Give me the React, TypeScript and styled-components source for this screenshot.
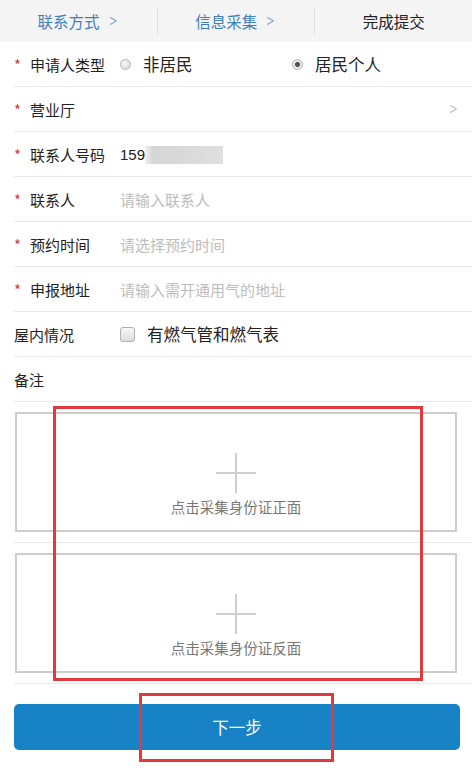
import React from "react";
import styled, { createGlobalStyle } from "styled-components";

const Global = createGlobalStyle`
  html, body { margin: 0; padding: 0; background: #fff; }
  body { font-family: "Noto Sans CJK SC", "Liberation Sans", sans-serif; }
  * { box-sizing: border-box; }
`;

const Page = styled.div`
  position: relative;
  width: 472px;
  min-height: 773px;
  background: #fff;
`;

const Steps = styled.div`
  display: flex;
  height: 42px;
  background: #f4f4f4;
  align-items: center;
`;

const Step = styled.div<{ $active?: boolean; $sep?: boolean }>`
  flex: 1;
  height: 26px;
  display: flex;
  align-items: center;
  justify-content: center;
  gap: 7px;
  font-size: 15.5px;
  color: ${(p) => (p.$active ? "#222" : "#3f7fbd")};
  border-left: ${(p) => (p.$sep ? "1px solid #dedede" : "none")};
`;

const Arrow = styled.span`
  color: #8aa9c9;
  font-size: 15px;
  font-family: "DejaVu Sans", sans-serif;
  transform: scaleX(0.7);
`;

const Row = styled.div`
  display: flex;
  align-items: center;
  height: 45px;
  margin-left: 14px;
  border-bottom: 1px solid #e9e9e9;
  padding-right: 12px;
`;

const Label = styled.div`
  width: 106px;
  flex: none;
  display: flex;
  align-items: center;
  font-size: 15px;
  color: #222;
`;

const Star = styled.span`
  color: #e03a3a;
  width: 16px;
  font-size: 15px;
`;

const Placeholder = styled.span`
  font-size: 15px;
  color: #bdbdbd;
`;

const Value = styled.span`
  font-size: 15px;
  color: #222;
  font-family: "Liberation Sans", "Noto Sans CJK SC", sans-serif;
`;

const Masked = styled.span`
  display: inline-block;
  width: 78px;
  height: 18px;
  margin-top: 1px;
  background: linear-gradient(90deg, #f0f0f0 0px, #d6d6d6 8px, #dcdcdc 60px, #e0e0e0 100%);
  filter: blur(0.6px);
`;

const RadioGroup = styled.div`
  display: flex;
  align-items: center;
`;

const RadioOption = styled.label`
  width: 172px;
  display: flex;
  align-items: center;
  gap: 12px;
  font-size: 16.5px;
  color: #222;
`;

const RadioDot = styled.span<{ $checked?: boolean }>`
  width: 11px;
  height: 11px;
  border-radius: 50%;
  border: 1px solid #b5b5b5;
  background: ${(p) =>
    p.$checked
      ? "radial-gradient(circle, #555 0 2.2px, #e8e8e8 2.8px)"
      : "radial-gradient(circle at 40% 35%, #f6f6f6, #d6d6d6)"};
  flex: none;
`;

const Chevron = styled.span`
  margin-left: auto;
  color: #c2c2c2;
  font-family: "DejaVu Sans", sans-serif;
  font-size: 15px;
  transform: scaleX(0.7);
`;

const CheckWrap = styled.label`
  display: flex;
  align-items: center;
  gap: 12px;
  font-size: 16.5px;
  color: #222;
`;

const CheckBox = styled.span`
  width: 15px;
  height: 15px;
  border-radius: 3px;
  border: 1px solid #b0b0b0;
  background: linear-gradient(#f7f7f7, #dcdcdc);
  flex: none;
`;

const UploadBlock = styled.div`
  margin-left: 14px;
  padding: 10px 15px 10px 1px;
  border-bottom: 1px solid #e9e9e9;
`;

const UploadBox = styled.div`
  height: 120px;
  border: 2px solid #cdcdcd;
  display: flex;
  flex-direction: column;
  align-items: center;
  padding-top: 38px;
  gap: 2px;
`;

const UploadText = styled.div`
  font-size: 14.5px;
  color: #777;
`;

const Button = styled.button`
  display: block;
  margin: 20px 12px 0 14px;
  width: 446px;
  height: 46px;
  border: none;
  border-radius: 5px;
  background: #1783c6;
  color: #fff;
  font-size: 16.5px;
  font-family: "Noto Sans CJK SC", sans-serif;
`;

const Mark = styled.div<{ $l: number; $t: number; $w: number; $h: number }>`
  position: absolute;
  left: ${(p) => p.$l}px;
  top: ${(p) => p.$t}px;
  width: ${(p) => p.$w}px;
  height: ${(p) => p.$h}px;
  border: 3px solid #e2393d;
  pointer-events: none;
`;

const Plus = () => (
  <svg width="42" height="42" viewBox="0 0 42 42">
    <path d="M21 1V41M1 21H41" stroke="#cfcfcf" strokeWidth="2" />
  </svg>
);

const Req = ({ children }: { children: React.ReactNode }) => (
  <Label>
    <Star>*</Star>
    {children}
  </Label>
);

export default function App() {
  return (
    <Page>
      <Global />
      <Steps>
        <Step>
          联系方式<Arrow>&gt;</Arrow>
        </Step>
        <Step $sep>
          信息采集<Arrow>&gt;</Arrow>
        </Step>
        <Step $sep $active>
          完成提交
        </Step>
      </Steps>

      <Row>
        <Req>申请人类型</Req>
        <RadioGroup>
          <RadioOption>
            <RadioDot />
            非居民
          </RadioOption>
          <RadioOption>
            <RadioDot $checked />
            居民个人
          </RadioOption>
        </RadioGroup>
      </Row>
      <Row>
        <Req>营业厅</Req>
        <Chevron>&gt;</Chevron>
      </Row>
      <Row>
        <Req>联系人号码</Req>
        <Value>159</Value>
        <Masked />
      </Row>
      <Row>
        <Req>联系人</Req>
        <Placeholder>请输入联系人</Placeholder>
      </Row>
      <Row>
        <Req>预约时间</Req>
        <Placeholder>请选择预约时间</Placeholder>
      </Row>
      <Row>
        <Req>申报地址</Req>
        <Placeholder>请输入需开通用气的地址</Placeholder>
      </Row>
      <Row>
        <Label>屋内情况</Label>
        <CheckWrap>
          <CheckBox />
          有燃气管和燃气表
        </CheckWrap>
      </Row>
      <Row>
        <Label>备注</Label>
      </Row>

      <UploadBlock>
        <UploadBox>
          <Plus />
          <UploadText>点击采集身份证正面</UploadText>
        </UploadBox>
      </UploadBlock>
      <UploadBlock>
        <UploadBox>
          <Plus />
          <UploadText>点击采集身份证反面</UploadText>
        </UploadBox>
      </UploadBlock>

      <Button>下一步</Button>

      <Mark $l={53} $t={406} $w={370} $h={275} />
      <Mark $l={139} $t={693} $w={195} $h={69} />
    </Page>
  );
}
